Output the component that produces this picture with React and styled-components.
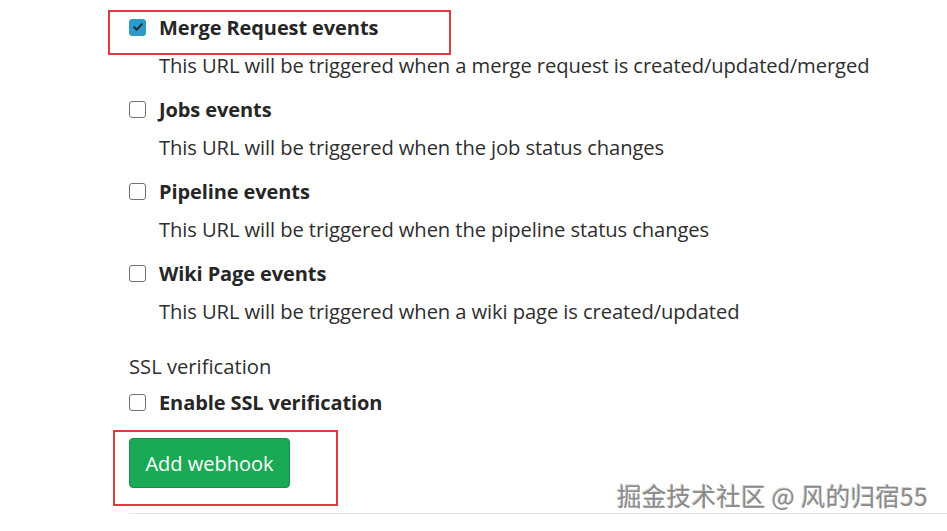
import React from "react";
import styled, { createGlobalStyle } from "styled-components";

const GlobalStyle = createGlobalStyle`
	html, body {
		margin: 0;
		padding: 0;
		background: #fff;
	}
	body {
		font-family: "Open Sans", "Noto Sans", sans-serif;
		color: #2e2e2e;
	}
`;

const events = [
	{ title: "Merge Request events", text: "This URL will be triggered when a merge request is created/updated/merged", checked: true },
	{ title: "Jobs events", text: "This URL will be triggered when the job status changes" },
	{ title: "Pipeline events", text: "This URL will be triggered when the pipeline status changes" },
	{ title: "Wiki Page events", text: "This URL will be triggered when a wiki page is created/updated" },
];

const Check = ({ checked }) => (
	<Box $checked={checked}>
		{checked && (
			<svg width="12" height="12" viewBox="0 0 12 12">
				<path d="M2.3 6.2 L4.9 8.7 L9.8 3.2" fill="none" stroke="#1c2a33" strokeWidth="2" strokeLinecap="round" strokeLinejoin="round" />
			</svg>
		)}
	</Box>
);

const App = () => {
	return (
		<Page>
			<GlobalStyle />
			<Form>
				{events.map((e) => (
					<Item key={e.title}>
						<Label>
							<Check checked={e.checked} />
							<span>{e.title}</span>
						</Label>
						<Help>{e.text}</Help>
					</Item>
				))}
				<Heading>SSL verification</Heading>
				<Label>
					<Check />
					<span>Enable SSL verification</span>
				</Label>
				<Actions>
					<Button>Add webhook</Button>
				</Actions>
			</Form>
			<Divider />
			<Mark top="10px" left="108px" width="343px" height="45px" />
			<Mark top="430px" left="113px" width="225px" height="76px" />
			<Watermark>掘金技术社区 @ 风的归宿55</Watermark>
		</Page>
	);
};

export default App;

const Page = styled.div`
	position: relative;
	width: 947px;
	height: 531px;
	overflow: hidden;
`;

const Form = styled.div`
	padding: 12px 0 0 129px;
	display: flex;
	flex-direction: column;
`;

const Item = styled.div`
	display: flex;
	flex-direction: column;
	margin-bottom: 14px;
`;

const Label = styled.label`
	display: flex;
	align-items: center;
	gap: 13px;
	height: 30px;
	font-size: 20px;
	font-weight: 700;
	color: #262626;
	letter-spacing: -0.1px;
`;

const Box = styled.span`
	width: 17px;
	height: 17px;
	box-sizing: border-box;
	border-radius: 3px;
	border: 1.5px solid ${(p) => (p.$checked ? "#2d9bc9" : "#707070")};
	background: ${(p) => (p.$checked ? "#2d9bc9" : "#fff")};
	display: flex;
	align-items: center;
	justify-content: center;
`;

const Help = styled.div`
	padding-left: 30px;
	margin-top: 8px;
	font-size: 20.2px;
	line-height: 30px;
	color: #2e2e2e;
	letter-spacing: -0.1px;
`;

const Heading = styled.div`
	margin-top: 11px;
	font-size: 20.2px;
	line-height: 30px;
	color: #2e2e2e;
	margin-bottom: 6px;
`;

const Actions = styled.div`
	margin-top: 21px;
`;

const Button = styled.button`
	width: 161px;
	height: 50px;
	border: 1px solid #168f48;
	border-radius: 4px;
	background: #1aaa55;
	color: #fff;
	font-family: "Open Sans", "Noto Sans", sans-serif;
	font-size: 20px;
	padding: 0;
`;

const Divider = styled.div`
	position: absolute;
	left: 129px;
	right: 0;
	top: 513px;
	height: 1px;
	background: #e5e5e5;
`;

const Mark = styled.div`
	position: absolute;
	top: ${(p) => p.top};
	left: ${(p) => p.left};
	width: ${(p) => p.width};
	height: ${(p) => p.height};
	box-sizing: border-box;
	border: 2px solid #e2393f;
`;

const Watermark = styled.div`
	position: absolute;
	left: 617px;
	top: 479px;
	font-family: "Noto Sans CJK SC", sans-serif;
	font-size: 24.5px;
	line-height: 34px;
	color: #8a8a8a;
	text-shadow: 1px 1px 0 #fff, -1px -1px 0 #d0d0d0;
	letter-spacing: 0.3px;
`;
